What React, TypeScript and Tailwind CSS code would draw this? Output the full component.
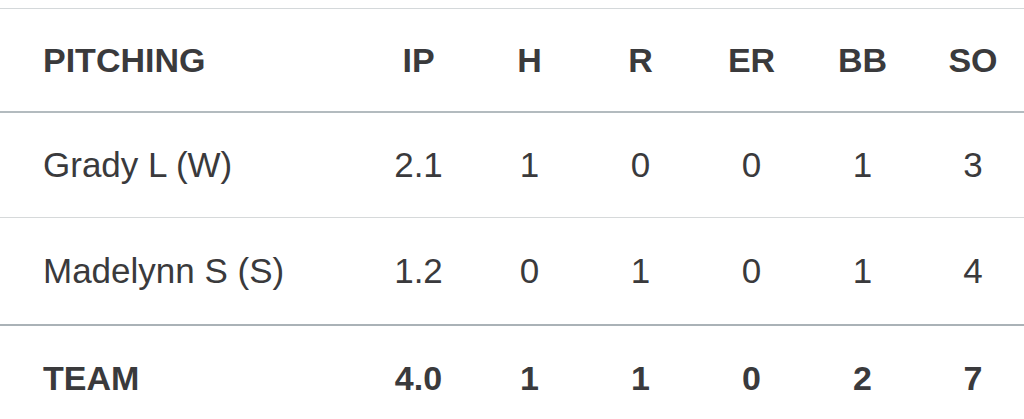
const cols = ['IP', 'H', 'R', 'ER', 'BB', 'SO']

const rows = [
  { name: 'Grady L (W)', stats: ['2.1', '1', '0', '0', '1', '3'] },
  { name: 'Madelynn S (S)', stats: ['1.2', '0', '1', '0', '1', '4'] },
]

const team = ['4.0', '1', '1', '0', '2', '7']

function Row({ label, values, bold, height }: { label: string; values: string[]; bold?: boolean; height: string }) {
  return (
    <div
      className={`grid grid-cols-[1fr_repeat(5,111px)_106px] items-center ${height} ${
        bold ? 'text-[34px] font-bold' : 'text-[35px]'
      }`}
    >
      <div className="pl-[43px]">{label}</div>
      {values.map((v, i) => (
        <div key={i} className={`text-center ${i === 5 ? 'pl-[4px]' : ''}`}>
          {v}
        </div>
      ))}
    </div>
  )
}

export default function App() {
  return (
    <div className="h-[419px] w-[1024px] overflow-hidden bg-white font-['Liberation_Sans',Arial,sans-serif] text-[#3a3a3c]">
      <div className="h-[8px]" />
      <div className="border-t border-[#d4d8da]" />
      <Row label="PITCHING" values={cols} bold height="h-[102px]" />
      <div className="border-t-2 border-[#b3bbbf]" />
      <Row label={rows[0].name} values={rows[0].stats} height="h-[104px]" />
      <div className="border-t border-[#d6d9da]" />
      <Row label={rows[1].name} values={rows[1].stats} height="h-[106px]" />
      <div className="border-t-2 border-[#aab2b7]" />
      <Row label="TEAM" values={team} bold height="h-[104px]" />
    </div>
  )
}
